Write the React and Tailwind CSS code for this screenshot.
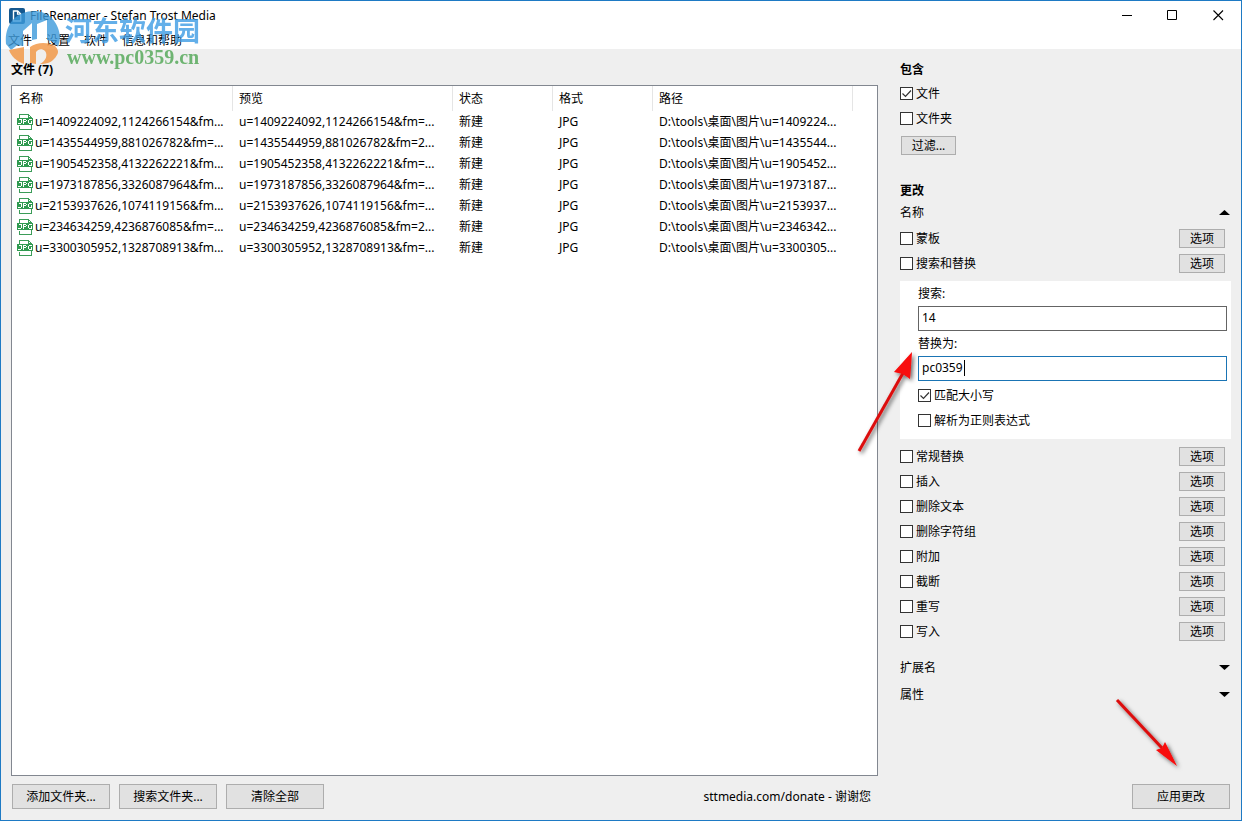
import { useState } from 'react';

const FILES = [
  { name: 'u=1409224092,1124266154&fm...', preview: 'u=1409224092,1124266154&fm=...', path: 'D:\\tools\\桌面\\图片\\u=1409224...' },
  { name: 'u=1435544959,881026782&fm=...', preview: 'u=1435544959,881026782&fm=2...', path: 'D:\\tools\\桌面\\图片\\u=1435544...' },
  { name: 'u=1905452358,4132262221&fm...', preview: 'u=1905452358,4132262221&fm=...', path: 'D:\\tools\\桌面\\图片\\u=1905452...' },
  { name: 'u=1973187856,3326087964&fm...', preview: 'u=1973187856,3326087964&fm=...', path: 'D:\\tools\\桌面\\图片\\u=1973187...' },
  { name: 'u=2153937626,1074119156&fm...', preview: 'u=2153937626,1074119156&fm=...', path: 'D:\\tools\\桌面\\图片\\u=2153937...' },
  { name: 'u=234634259,4236876085&fm=...', preview: 'u=234634259,4236876085&fm=2...', path: 'D:\\tools\\桌面\\图片\\u=2346342...' },
  { name: 'u=3300305952,1328708913&fm...', preview: 'u=3300305952,1328708913&fm=...', path: 'D:\\tools\\桌面\\图片\\u=3300305...' },
];

const MENU = ['文件', '设置', '软件', '信息和帮助'];
const COLUMNS = ['名称', '预览', '状态', '格式', '路径'];
const RULES = ['常规替换', '插入', '删除文本', '删除字符组', '附加', '截断', '重写', '写入'];

function AppIcon() {
  return (
    <svg width="16" height="16" viewBox="0 0 16 16">
      <rect width="16" height="16" rx="2" fill="#15588f" />
      <path d="M4.5 3h4.2l3 3v7H4.5z" fill="none" stroke="#fff" strokeWidth="1.4" />
      <path d="M8.5 3v3.2h3" fill="none" stroke="#fff" strokeWidth="1.2" />
    </svg>
  );
}

function JpgIcon() {
  return (
    <svg className="shrink-0" width="16" height="16" viewBox="0 0 16 16" shapeRendering="crispEdges">
      <path d="M2.5 5V.5h9l3 3v12h-12V12" fill="#fff" stroke="#3b9c58" />
      <path d="M11.5.5v3h3" fill="none" stroke="#3b9c58" />
      <rect y="4" width="16" height="7" fill="#2f9a50" />
      {/* J P G pixels */}
      <path
        d="M2 5.500h3M4.500 5v4M1 9.500h3M6.500 5v5M7 5.500h2M9.500 6v1M7 7.500h2M12 5.500h3M11.500 6v3M12 9.500h3M14.500 7v2"
        fill="none"
        stroke="#fff"
      />
    </svg>
  );
}

// Site stamp laid over the title and menu bars
function Watermark() {
  return (
    <div className="absolute left-1 top-2 flex items-start pointer-events-none opacity-80" aria-hidden="true">
      <svg width="60" height="60" viewBox="0 0 60 60">
        <path d="M1 35C-1 15 12 2 29 2c14 0 24 10 26 25 0 4-1 8-2 11-2-4-6-6-11-7V11l-10 4v15l-5 1V14l-9 8v15z" fill="#3d9bdb" />
        <path d="M1 35c5-5 9-8 14-10v9l-9 7z" fill="#3d9bdb" />
        <path d="M4 41l15-3v17C11 52 6 47 4 41z" fill="#f29440" />
        <path d="M25 38c7-5 18-5 25-1 3 3 4 6 2 9-4 7-9 9-17 9 6-3 8-9 5-13-3-3-7-2-9 1v12l-6-1z" fill="#f29440" />
      </svg>
      <div className="flex flex-col pt-2">
        <span className="text-[27px] leading-7 font-bold text-[#3d9ce4] whitespace-nowrap">河东软件园</span>
        <span className="font-['Liberation_Serif',serif] text-xl leading-6 font-bold text-[#4fa653] pl-0.5">www.pc0359.cn</span>
      </div>
    </div>
  );
}

function RedArrow({ className, width, height, shaft, head, id }) {
  return (
    <svg className={`absolute pointer-events-none overflow-visible ${className}`} width={width} height={height} aria-hidden="true">
      <defs>
        <filter id={id} x="-30%" y="-30%" width="160%" height="160%">
          <feDropShadow dx="2" dy="2" stdDeviation="2" floodColor="#000" floodOpacity="0.6" />
        </filter>
      </defs>
      <g filter={`url(#${id})`}>
        <path d={shaft} stroke="#dc0c0c" strokeWidth="3" />
        <path d={head} fill="#f80808" />
      </g>
    </svg>
  );
}

function CheckBox({ label, initial = false }) {
  const [checked, setChecked] = useState(initial);
  return (
    <label className="flex items-center gap-[3px] h-[25px]">
      <span className="grid">
        <input
          type="checkbox"
          checked={checked}
          onChange={() => setChecked(!checked)}
          className="col-start-1 row-start-1 appearance-none w-[13px] h-[13px] border border-[#333] bg-white"
        />
        {checked && (
          <svg className="col-start-1 row-start-1 pointer-events-none" width="13" height="13" viewBox="0 0 13 13">
            <path d="M2.500 6.500l3 3 5.500-6" fill="none" stroke="#333" strokeWidth="1.2" />
          </svg>
        )}
      </span>
      {label}
    </label>
  );
}

function Button({ children, className }) {
  return (
    <button className={`border border-[#adadad] bg-[#e1e1e1] hover:border-[#0078d7] hover:bg-[#e5f1fb] ${className}`}>
      {children}
    </button>
  );
}

function RuleRow({ label }) {
  return (
    <div className="flex items-center justify-between pr-1.5">
      <CheckBox label={label} />
      <Button className="w-[46px] h-[19px] leading-4">选项</Button>
    </div>
  );
}

function SectionToggle({ label, open = false }) {
  return (
    <button className="flex w-full items-center justify-between h-[27px]" aria-expanded={open}>
      {label}
      <svg width="11" height="5" viewBox="0 0 11 5">
        <path d={open ? 'M0 5L5.500 0 11 5z' : 'M0 0h11L5.500 5z'} fill="#000" />
      </svg>
    </button>
  );
}

function TitleBar() {
  return (
    <header className="bg-white">
      <div className="flex items-center h-[29px] pl-2">
        <AppIcon />
        <span className="flex-1 pl-[5px]">FileRenamer - Stefan Trost Media</span>
        <button className="grid place-items-center w-[46px] h-full" aria-label="最小化">
          <svg width="11" height="11" viewBox="0 0 11 11"><path d="M0 5.500h10" stroke="#000" /></svg>
        </button>
        <button className="grid place-items-center w-[45px] h-full" aria-label="最大化">
          <svg width="11" height="11" viewBox="0 0 11 11"><path d="M.5.5h9v9h-9z" fill="none" stroke="#000" /></svg>
        </button>
        <button className="grid place-items-center w-[46px] h-full" aria-label="关闭">
          <svg width="11" height="11" viewBox="0 0 11 11"><path d="M.5.5l9.500 9.500M10 .5L.5 10" stroke="#000" strokeWidth="1.100" /></svg>
        </button>
      </div>
      <nav className="flex h-[19px]">
        {MENU.map((item) => (
          <button key={item} className="px-[7px] pt-0.5">{item}</button>
        ))}
      </nav>
    </header>
  );
}

function FileTable() {
  return (
    <div className="flex-1 border border-[#828790] bg-white overflow-hidden">
      <table className="w-full table-fixed border-separate border-spacing-0 text-left whitespace-nowrap">
        <colgroup>
          <col className="w-[221px]" />
          <col className="w-[220px]" />
          <col className="w-[100px]" />
          <col className="w-[100px]" />
          <col className="w-[200px]" />
          <col />
        </colgroup>
        <thead>
          <tr className="h-[25px]">
            {COLUMNS.map((col) => (
              <th key={col} className="font-normal p-0 pl-1.5 first:pl-[7px] border-r border-[#e5e5e5]">{col}</th>
            ))}
            <th className="p-0" />
          </tr>
        </thead>
        <tbody>
          {FILES.map((file) => (
            <tr key={file.path} className="h-[21px]">
              <td className="p-0 pl-[5px] pt-px">
                <span className="flex items-center gap-0.5"><JpgIcon />{file.name}</span>
              </td>
              <td className="p-0 pl-1.5 pt-px">{file.preview}</td>
              <td className="p-0 pl-1.5 pt-px">新建</td>
              <td className="p-0 pl-1.5 pt-px">JPG</td>
              <td className="p-0 pl-1.5 pt-px">{file.path}</td>
              <td className="p-0" />
            </tr>
          ))}
        </tbody>
      </table>
    </div>
  );
}

function ReplacePanel() {
  const [search, setSearch] = useState('14');
  const [replace, setReplace] = useState('pc0359');
  return (
    <div className="relative my-[5px] bg-white pl-[18px] pr-1 pb-1.5">
      <label htmlFor="search" className="block h-[25px] leading-[25px]">搜索:</label>
      <input
        id="search"
        type="text"
        value={search}
        onChange={(e) => setSearch(e.target.value)}
        className="block w-full h-[25px] border border-[#646464] bg-white px-[3px] pb-0.5 outline-none"
      />
      <label htmlFor="replace" className="block h-[25px] leading-[25px]">替换为:</label>
      <div className="relative">
        <input
          id="replace"
          type="text"
          value={replace}
          onChange={(e) => setReplace(e.target.value)}
          className="block w-full h-[25px] border border-[#1a74b4] bg-white px-[3px] pb-0.5 outline-none caret-transparent"
        />
        <span className="absolute left-[46px] top-1 w-px h-4 bg-black" />
      </div>
      <div className="pt-0.5">
        <CheckBox label="匹配大小写" initial />
        <CheckBox label="解析为正则表达式" />
      </div>
      <RedArrow
        id="arrow-replace"
        className="-left-[42px] top-[70px]"
        width="56"
        height="102"
        shaft="M1 100L45 22"
        head="M54 1L52 28 45 23 36 21z"
      />
    </div>
  );
}

export default function App() {
  return (
    <div className="relative flex flex-col min-h-screen border border-[#1e7ac4] bg-[#efefef] text-xs leading-4 text-black font-['Noto_Sans','Noto_Sans_CJK_SC',sans-serif]">
      <TitleBar />
      <Watermark />

      <div className="flex flex-1 gap-[22px] pl-2.5 pr-2.5 pt-[11px]">
        <main className="flex flex-1 flex-col min-w-0">
          <h1 className="relative font-bold h-[25px] leading-5">文件 (7)</h1>
          <FileTable />
        </main>

        <aside className="w-[331px] shrink-0">
          <h2 className="font-bold h-[21px] leading-5">包含</h2>
          <CheckBox label="文件" initial />
          <CheckBox label="文件夹" />
          <Button className="mt-[5px] ml-px w-[55px] h-[19px] leading-4 block">过滤...</Button>

          <h2 className="font-bold h-4 leading-4 mt-7">更改</h2>
          <div className="pr-px">
            <SectionToggle label="名称" open />
          </div>
          <RuleRow label="蒙板" />
          <RuleRow label="搜索和替换" />
          <ReplacePanel />
          {RULES.map((rule) => <RuleRow key={rule} label={rule} />)}
          <div className="pt-2.5 pr-px">
            <SectionToggle label="扩展名" />
            <SectionToggle label="属性" />
          </div>
        </aside>
      </div>

      <footer className="flex items-center gap-[9px] px-[11px] pt-2 pb-[11px]">
        <Button className="w-[98px] h-[25px]">添加文件夹...</Button>
        <Button className="w-[98px] h-[25px]">搜索文件夹...</Button>
        <Button className="w-[98px] h-[25px]">清除全部</Button>
        <a href="#donate" className="ml-auto mr-[252px]">sttmedia.com/donate - 谢谢您</a>
        <div className="relative">
          <Button className="w-[98px] h-[25px]">应用更改</Button>
          <RedArrow
            id="arrow-apply"
            className="-left-4 -top-[85px]"
            width="62"
            height="68"
            shaft="M1 1L46 49"
            head="M61 67L40 51 46 49 49 43z"
          />
        </div>
      </footer>
    </div>
  );
}
